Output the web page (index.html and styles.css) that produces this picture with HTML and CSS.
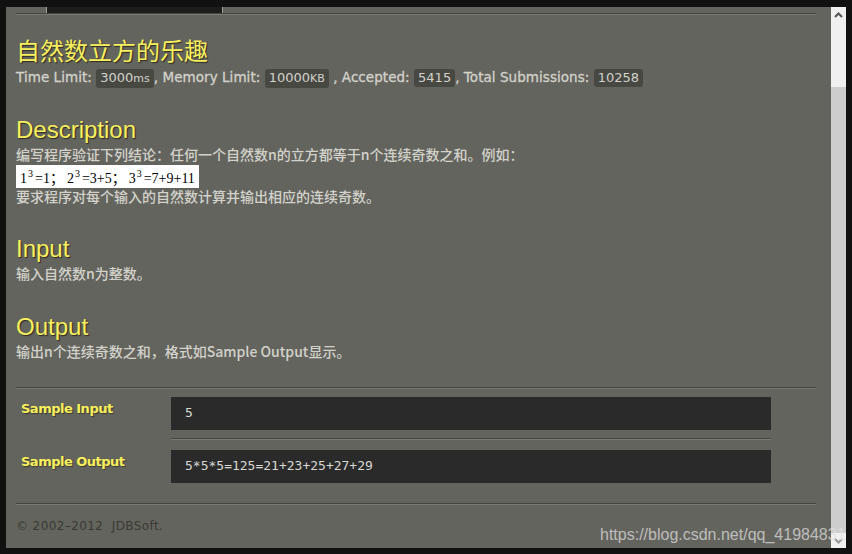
FILE: index.html
```html
<!DOCTYPE html>
<html lang="zh">
<head>
<meta charset="utf-8">
<title>自然数立方的乐趣</title>
<link rel="stylesheet" href="styles.css">
</head>
<body>
<div class="frame">
  <main class="page">
    <div class="tabs">
      <div class="tab"></div>
      <div class="tab active"></div>
    </div>
    <h1 class="title first">自然数立方的乐趣</h1>
    <p class="meta">Time Limit: <span class="pill">3000<small>ms</small></span>, Memory Limit: <span class="pill">10000<small>KB</small></span> , Accepted: <span class="pill">5415</span>, Total Submissions: <span class="pill">10258</span></p>

    <h2 class="title">Description</h2>
    <p class="text">编写程序验证下列结论：任何一个自然数n的立方都等于n个连续奇数之和。例如：</p>
    <div class="formula">1<sup>3</sup>=1；<span class="gap"></span>2<sup>3</sup>=3+5；<span class="gap"></span>3<sup>3</sup>=7+9+11</div>
    <p class="text end-a">要求程序对每个输入的自然数计算并输出相应的连续奇数。</p>

    <h2 class="title">Input</h2>
    <p class="text end-b">输入自然数n为整数。</p>

    <h2 class="title">Output</h2>
    <p class="text">输出n个连续奇数之和，格式如Sample Output显示。</p>

    <hr class="rule samples-rule">
    <section class="sample">
      <h3 class="sample-label">Sample Input</h3>
      <pre class="code">5</pre>
    </section>
    <hr class="rule inner-rule">
    <section class="sample second">
      <h3 class="sample-label">Sample Output</h3>
      <pre class="code">5*5*5=125=21+23+25+27+29</pre>
    </section>
    <hr class="rule footer-rule">
    <footer class="footer">© 2002–2012&nbsp; JDBSoft.</footer>
  </main>
  <aside class="scrollbar">
    <div class="thumb"><svg class="arrow" width="9" height="6" viewBox="0 0 9 6"><path d="M1 5 L4.5 1.5 L8 5" fill="none" stroke="#555" stroke-width="2"/></svg></div>
    <div class="track"></div>
    <div class="down"><svg class="arrow" width="9" height="6" viewBox="0 0 9 6"><path d="M1 1 L4.5 4.5 L8 1" fill="none" stroke="#999" stroke-width="2"/></svg></div>
  </aside>
</div>
<div class="watermark">https://blog.csdn.net/qq_41984831</div>
</body>
</html>
```

FILE: styles.css
```css
* { box-sizing: border-box; }
html, body { margin: 0; padding: 0; }
body {
  width: 852px;
  height: 554px;
  background: #111;
  overflow: hidden;
  position: relative;
  font-family: "DejaVu Sans", "Noto Sans CJK SC", sans-serif;
}
.frame {
  display: flex;
  height: 541px;
  margin: 7px 6px 0 6px;
}
.page {
  width: 825px;
  background: #64645e;
  padding: 0 15px 0 10px;
  overflow: hidden;
}
.tabs {
  display: flex;
  height: 7px;
  border-bottom: 1px solid #45453e;
  box-shadow: 0 1px 0 #7b7b71;
}
.tab { width: 31px; height: 6px; border-right: 1px solid #a0a098; }
.tab.active { width: 176px; background: #1c1c1c; border-right: 1px solid #a0a098; }
.title {
  margin: 0;
  font-family: "Liberation Sans", "Noto Sans CJK SC", sans-serif;
  font-weight: 400;
  font-size: 24px;
  line-height: 28px;
  color: #f8f05c;
  text-shadow: 1px 1px 1px #2a2a24;
}
.title.first { margin-top: 24px; }
h2.title { margin: 0 0 2px; }
.meta {
  margin: 1px 0 29px;
  font-size: 13.5px;
  line-height: 20px;
  font-weight: 400;
  color: #d2d2cb;
  white-space: nowrap;
  height: 20px;
  letter-spacing: 0.05px;
  -webkit-text-stroke: 0.3px #d2d2cb;
}
.pill {
  display: inline-block;
  padding: 0 4px;
  font-size: 13px;
  line-height: 18px;
  letter-spacing: 0;
  background: #484843;
  border-radius: 3px;
  -webkit-text-stroke: 0;
}
.pill small { font-size: 11px; }
.text {
  margin: 0;
  font-family: "Noto Sans CJK SC", sans-serif;
  font-size: 14px;
  font-weight: 500;
  line-height: 16px;
  color: #d2d2cb;
  white-space: nowrap;
}
.text.end-a { margin-bottom: 31px; }
.text.end-b { margin-bottom: 32px; }
.formula {
  width: 183px;
  height: 23px;
  margin-top: 3px;
  background: #fff;
  color: #000;
  font-family: "Liberation Serif", "Noto Sans CJK SC", serif;
  font-size: 14px;
  line-height: 27px;
  padding-left: 4px;
  white-space: nowrap;
}
.formula sup { font-size: 10px; line-height: 0; vertical-align: 6px; padding: 0 2px 0 1px; }
.gap { display: inline-block; width: 3px; }
.rule { border: 0; margin: 0; height: 2px; background: linear-gradient(#45453e 50%, #7b7b71 50%); }
.samples-rule { margin-top: 28px; }
.sample { display: flex; align-items: flex-start; padding-top: 8px; }
.sample.second { padding-top: 10px; }
.sample-label {
  margin: 0;
  width: 155px;
  padding: 2px 0 0 5px;
  font-family: "DejaVu Sans", sans-serif;
  font-size: 13px;
  font-weight: 700;
  letter-spacing: -0.5px;
  line-height: 20px;
  color: #f8f05c;
  text-shadow: 1px 1px 1px #3a3a34;
}
.code {
  margin: 0;
  width: 600px;
  height: 33px;
  background: #2a2a2a;
  color: #d8d8d2;
  padding-left: 14px;
  font-family: "DejaVu Sans Mono", monospace;
  font-size: 13px;
  line-height: 32px;
}
.inner-rule { width: 600px; margin: 8px 0 0 155px; }
.footer-rule { margin-top: 20px; }
.footer {
  margin-top: 12px;
  font-size: 12px;
  line-height: 18px;
  color: #3a3a34;
  letter-spacing: 0.4px;
}
.scrollbar {
  width: 15px;
  display: flex;
  flex-direction: column;
  background: #cdcdcd;
}
.thumb { height: 80px; background: #f0f0f0; }
.track { flex: 1; }
.down { height: 15px; background: #f0f0f0; }
.arrow { display: block; margin: 5px auto 0; }
.watermark {
  position: absolute;
  left: 600px;
  top: 525px;
  font-family: "Liberation Sans", sans-serif;
  font-size: 16px;
  line-height: 20px;
  color: rgba(225, 225, 225, 0.72);
  white-space: nowrap;
}
```
